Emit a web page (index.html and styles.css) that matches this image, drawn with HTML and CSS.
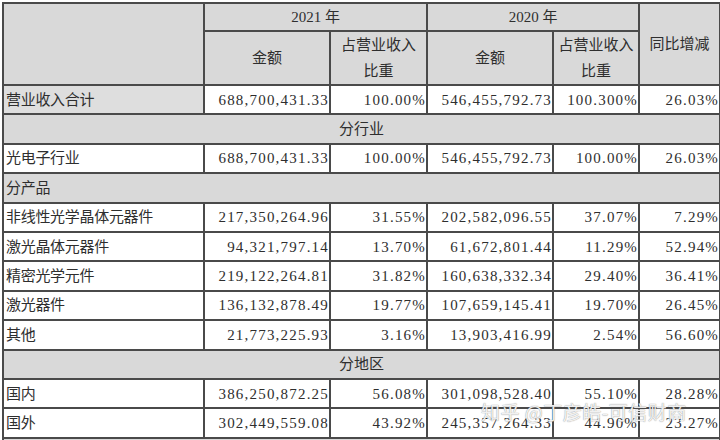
FILE: index.html
```html
<!DOCTYPE html>
<html lang="zh-CN">
<head>
<meta charset="utf-8">
<title>营业收入构成</title>
<link rel="stylesheet" href="styles.css">
</head>
<body>
<div class="wrap">
<table class="rev">
  <colgroup>
    <col class="c1"><col class="c2"><col class="c3"><col class="c4"><col class="c5"><col class="c6">
  </colgroup>
  <thead>
    <tr class="h1">
      <th rowspan="2" class="blank"></th>
      <th colspan="2">2021 年</th>
      <th colspan="2">2020 年</th>
      <th rowspan="2" class="yoy">同比增减</th>
    </tr>
    <tr class="h2">
      <th>金额</th>
      <th>占营业收入<br>比重</th>
      <th>金额</th>
      <th>占营业收入<br>比重</th>
    </tr>
  </thead>
  <tbody>
    <tr>
      <td class="label shade">营业收入合计</td>
      <td class="num">688,700,431.33</td>
      <td class="num">100.00%</td>
      <td class="num">546,455,792.73</td>
      <td class="num">100.300%</td>
      <td class="num">26.03%</td>
    </tr>
    <tr class="section">
      <td colspan="6" class="center">分行业</td>
    </tr>
    <tr>
      <td class="label">光电子行业</td>
      <td class="num">688,700,431.33</td>
      <td class="num">100.00%</td>
      <td class="num">546,455,792.73</td>
      <td class="num">100.00%</td>
      <td class="num">26.03%</td>
    </tr>
    <tr class="section">
      <td colspan="6" class="label">分产品</td>
    </tr>
    <tr>
      <td class="label">非线性光学晶体元器件</td>
      <td class="num">217,350,264.96</td>
      <td class="num">31.55%</td>
      <td class="num">202,582,096.55</td>
      <td class="num">37.07%</td>
      <td class="num">7.29%</td>
    </tr>
    <tr>
      <td class="label">激光晶体元器件</td>
      <td class="num">94,321,797.14</td>
      <td class="num">13.70%</td>
      <td class="num">61,672,801.44</td>
      <td class="num">11.29%</td>
      <td class="num">52.94%</td>
    </tr>
    <tr>
      <td class="label">精密光学元件</td>
      <td class="num">219,122,264.81</td>
      <td class="num">31.82%</td>
      <td class="num">160,638,332.34</td>
      <td class="num">29.40%</td>
      <td class="num">36.41%</td>
    </tr>
    <tr>
      <td class="label">激光器件</td>
      <td class="num">136,132,878.49</td>
      <td class="num">19.77%</td>
      <td class="num">107,659,145.41</td>
      <td class="num">19.70%</td>
      <td class="num">26.45%</td>
    </tr>
    <tr>
      <td class="label">其他</td>
      <td class="num">21,773,225.93</td>
      <td class="num">3.16%</td>
      <td class="num">13,903,416.99</td>
      <td class="num">2.54%</td>
      <td class="num">56.60%</td>
    </tr>
    <tr class="section">
      <td colspan="6" class="center">分地区</td>
    </tr>
    <tr>
      <td class="label">国内</td>
      <td class="num">386,250,872.25</td>
      <td class="num">56.08%</td>
      <td class="num">301,098,528.40</td>
      <td class="num">55.10%</td>
      <td class="num">28.28%</td>
    </tr>
    <tr>
      <td class="label">国外</td>
      <td class="num">302,449,559.08</td>
      <td class="num">43.92%</td>
      <td class="num">245,357,264.33</td>
      <td class="num">44.90%</td>
      <td class="num">23.27%</td>
    </tr>
    <tr class="section">
      <td colspan="6" class="label">&nbsp;</td>
    </tr>
  </tbody>
</table>
<div class="watermark">知乎 @丁彦皓-可信财商</div>
</div>
</body>
</html>
```

FILE: styles.css
```css
html, body {
  margin: 0;
  padding: 0;
  background: #ffffff;
  overflow: hidden;
}

.wrap {
  position: relative;
  width: 720px;
  height: 440px;
  overflow: hidden;
}

.rev {
  margin: 2px 0 0 2px;
  border-collapse: collapse;
  table-layout: fixed;
  width: 717px;
  font-family: "Liberation Serif", "Noto Sans CJK SC", serif;
  font-size: 15px;
  color: #2e2e2e;
}

.c1 { width: 201px; }
.c2 { width: 126px; }
.c3 { width: 97px; }
.c4 { width: 126px; }
.c5 { width: 86px; }
.c6 { width: 81px; }

.rev th,
.rev td {
  border: 2px solid #4a4a4a;
  padding: 0;
  white-space: nowrap;
  overflow: hidden;
}

.rev th {
  background: #d9d9d9;
  font-weight: 400;
  text-align: center;
  vertical-align: middle;
  line-height: 26px;
}

.h1 th {
  height: 25px;
}

.h2 th {
  height: 49px;
}

.rev td {
  height: 27.4px;
  line-height: 20px;
  vertical-align: middle;
  background: #ffffff;
}

.rev td.label {
  text-align: left;
  padding-left: 2px;
  letter-spacing: -0.3px;
}

.rev td.shade {
  background: #dedede;
}

.rev td.num {
  text-align: right;
  padding-right: 0;
  letter-spacing: 1.2px;
}

.rev td.center {
  text-align: center;
}

.section td {
  background: #d9d9d9;
}

.watermark {
  position: absolute;
  left: 481px;
  top: 398px;
  font-family: "Noto Sans CJK SC", sans-serif;
  font-size: 19px;
  color: rgba(255, 255, 255, 0.9);
  text-shadow: 0 0 1px rgba(90, 90, 90, 0.55), 0 0 1px rgba(90, 90, 90, 0.4);
  letter-spacing: 0.5px;
  white-space: nowrap;
}
```
